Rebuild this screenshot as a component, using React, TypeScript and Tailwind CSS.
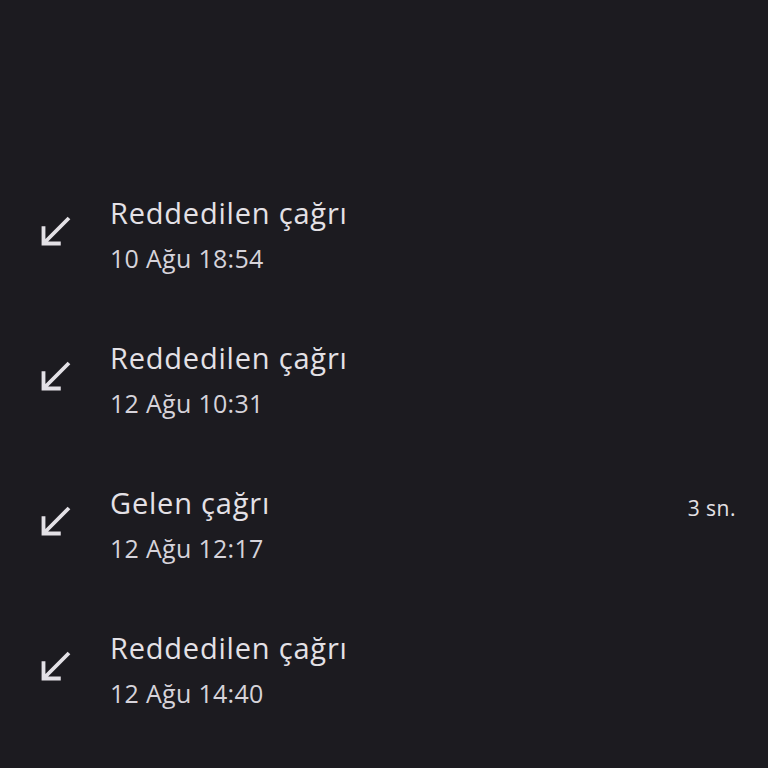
const calls = [
  { title: 'Reddedilen çağrı', time: '10 Ağu 18:54' },
  { title: 'Reddedilen çağrı', time: '12 Ağu 10:31' },
  { title: 'Gelen çağrı', time: '12 Ağu 12:17', duration: '3 sn.' },
  { title: 'Reddedilen çağrı', time: '12 Ağu 14:40' },
];

function IncomingIcon() {
  return (
    <svg viewBox="0 0 24 24" className="h-[46px] w-[46px]" fill="#e3e1e6">
      <path d="M20 5.41 18.59 4 7 15.59V9H5v10h10v-2H8.41z" />
    </svg>
  );
}

export default function App() {
  return (
    <div className="h-[768px] w-[768px] overflow-hidden bg-[#1c1b20] pt-[162px] font-['Open_Sans',sans-serif]">
      {calls.map((c, i) => (
        <div key={i} className="flex h-[145px] items-center pl-[32px] pr-[32px]">
          <div className="mt-[-6px] flex w-[78px] shrink-0">
            <IncomingIcon />
          </div>
          <div className="flex flex-1 flex-col">
            <div className="flex items-start justify-between">
              <span className="text-[29px] leading-[36px] tracking-[0.8px] text-[#e4e1e6]">{c.title}</span>
              {c.duration && (
                <span className="mt-[10px] text-[21px] leading-[26px] tracking-[0.5px] text-[#e4e1e6]">
                  {c.duration}
                </span>
              )}
            </div>
            <span className="mt-[11px] text-[25px] leading-[32px] tracking-[0.3px] text-[#d6d3da]">{c.time}</span>
          </div>
        </div>
      ))}
    </div>
  );
}
